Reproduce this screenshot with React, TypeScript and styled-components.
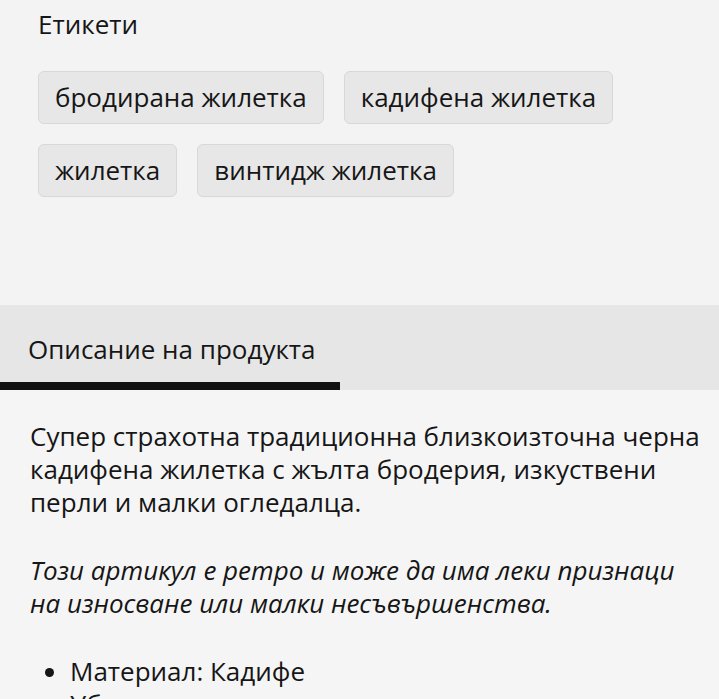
import styled, { createGlobalStyle } from 'styled-components';

const GlobalStyle = createGlobalStyle`
  body {
    margin: 0;
    background: #f3f3f3;
    font-family: 'Open Sans', 'Noto Sans', sans-serif;
    color: #161616;
  }
`;

const Page = styled.div`
  width: 719px;
  height: 699px;
  overflow: hidden;
  background: #f3f3f3;
`;

const TagsBlock = styled.section`
  padding: 6px 38px 0;
  height: 305px;
  box-sizing: border-box;
`;

const TagsTitle = styled.h3`
  margin: 0 0 29px;
  font-size: 26px;
  font-weight: 400;
  line-height: 36px;
`;

const TagList = styled.div`
  display: flex;
  flex-wrap: wrap;
  gap: 20px;
`;

const Tag = styled.span`
  display: inline-block;
  padding: 9px 16px 10px;
  font-size: 26px;
  line-height: 32px;
  background: #e7e7e7;
  border: 1px solid #d8d8d8;
  border-radius: 6px;
`;

const TabBar = styled.div`
  display: flex;
  height: 85px;
  background: #e6e6e6;
`;

const Tab = styled.div<{ active?: boolean }>`
  width: 340px;
  box-sizing: border-box;
  padding: 26px 0 0 28px;
  font-size: 26px;
  line-height: 36px;
  border-bottom: 8px solid ${p => (p.active ? '#111' : 'transparent')};
`;

const Panel = styled.div`
  padding: 30px 12px 0 30px;
  background: #f5f5f5;
  font-size: 26px;
  line-height: 33px;
`;

const Para = styled.p<{ italic?: boolean }>`
  margin: 0 0 35px;
  font-style: ${p => (p.italic ? 'italic' : 'normal')};
`;

const Features = styled.ul`
  margin: 0;
  padding-left: 40px;
`;

export default function App() {
  return (
    <Page>
      <GlobalStyle />
      <TagsBlock>
        <TagsTitle>Етикети</TagsTitle>
        <TagList>
          <Tag>бродирана жилетка</Tag>
          <Tag>кадифена жилетка</Tag>
          <Tag>жилетка</Tag>
          <Tag>винтидж жилетка</Tag>
        </TagList>
      </TagsBlock>
      <TabBar>
        <Tab active>Описание на продукта</Tab>
      </TabBar>
      <Panel>
        <Para>
          Супер страхотна традиционна близкоизточна черна кадифена жилетка с жълта бродерия, изкуствени перли и малки огледалца.
        </Para>
        <Para italic>
          Този артикул е ретро и може да има леки признаци на износване или малки несъвършенства.
        </Para>
        <Features>
          <li>Материал: Кадифе</li>
          <li>Убождания: няма</li>
        </Features>
      </Panel>
    </Page>
  );
}
